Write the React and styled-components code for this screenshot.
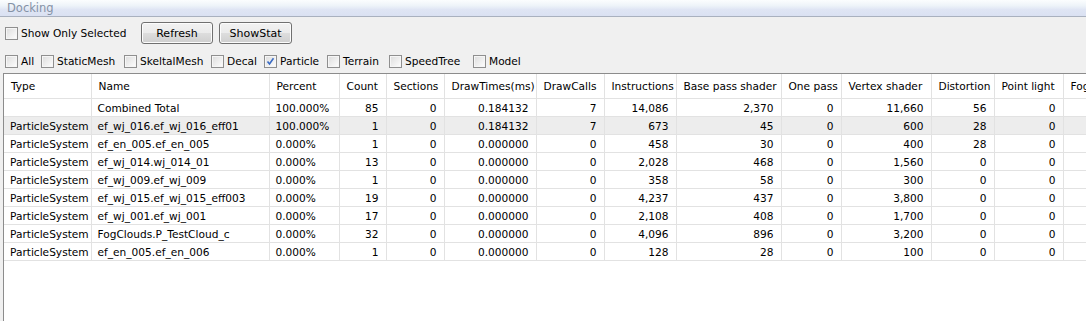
import React from "react";
import styled, { createGlobalStyle } from "styled-components";

const Global = createGlobalStyle`
  html, body { margin: 0; padding: 0; background: #f0f0f0; overflow: hidden; }
  body { font-family: "DejaVu Sans", Tahoma, sans-serif; font-size: 10.6px; color: #000; }
`;

const Window = styled.div`
  width: 1086px;
  height: 321px;
  display: flex;
  flex-direction: column;
  background: #f0f0f0;
  overflow: hidden;
`;

const TitleBar = styled.div`
  height: 16px;
  flex: none;
  display: flex;
  align-items: center;
  padding-left: 7px;
  background: linear-gradient(#fbfdfe 0%, #eef4f9 35%, #dfe5f4 60%, #dae1f2 100%);
  border-bottom: 1px solid #a9b1bf;
  color: #8592a6;
  font-size: 11.5px;
`;

const ToolRow = styled.div`
  display: flex;
  align-items: center;
  padding-left: 5px;
  margin-top: ${(p) => p.$top}px;
  height: ${(p) => p.$h}px;
  flex: none;
`;

const CheckItem = styled.label`
  display: inline-flex;
  align-items: center;
  gap: 3px;
  width: ${(p) => p.$w}px;
  flex: none;
  white-space: nowrap;
`;

const Box = styled.span`
  width: 11px;
  height: 11px;
  flex: none;
  border: 1px solid #8f8f8f;
  background: linear-gradient(135deg, #dcdcdc 0%, #f4f4f4 70%, #ffffff 100%);
  box-shadow: inset 0 0 0 1px #f6f6f6;
  display: inline-flex;
  align-items: center;
  justify-content: center;
`;

const Button = styled.button`
  height: 22px;
  width: ${(p) => p.$w}px;
  margin-right: ${(p) => p.$mr ?? 0}px;
  flex: none;
  border: 1px solid #707070;
  border-radius: 3px;
  background: linear-gradient(#f2f2f2 0%, #ebebeb 50%, #dddddd 51%, #cfcfcf 100%);
  box-shadow: inset 0 0 0 1px #fcfcfc;
  font-family: inherit;
  font-size: 11px;
  color: #000;
  padding: 0;
`;

const TableWrap = styled.div`
  margin-top: 5px;
  margin-left: 3px;
  flex: 1;
  background: #fff;
  border-top: 1px solid #8c8c8c;
  border-left: 1px solid #8c8c8c;
  overflow: hidden;
`;

const Table = styled.table`
  border-collapse: collapse;
  table-layout: fixed;
  width: ${(p) => p.$w}px;
`;

const Th = styled.th`
  height: 24px;
  font-weight: normal;
  text-align: left;
  padding: 0 0 0 7px;
  border-right: 1px solid #e2e2e2;
  border-bottom: 1px solid #e2e2e2;
  white-space: nowrap;
  overflow: hidden;
  background: #fff;
`;

const Tr = styled.tr`
  background: ${(p) => (p.$sel ? "#ededed" : "#fff")};
`;

const Td = styled.td`
  height: 17px;
  padding: 0 ${(p) => (p.$num ? "7px" : "0")} 0 ${(p) => (p.$num ? "0" : "6px")};
  text-align: ${(p) => (p.$num ? "right" : "left")};
  border-right: 1px solid #e2e2e2;
  border-bottom: 1px solid #e2e2e2;
  white-space: nowrap;
  overflow: hidden;
`;

const Check = () => (
  <svg width="9" height="9" viewBox="0 0 9 9">
    <path d="M1.5 4.5 L3.5 7 L7.5 1.2" fill="none" stroke="#3a6bc4" strokeWidth="1.6" />
  </svg>
);

const CheckBox = ({ label, checked, w }) => (
  <CheckItem $w={w}>
    <Box>{checked && <Check />}</Box>
    {label}
  </CheckItem>
);

const filters = [
  { label: "All", w: 36 },
  { label: "StaticMesh", w: 83 },
  { label: "SkeltalMesh", w: 87 },
  { label: "Decal", w: 53 },
  { label: "Particle", w: 63, checked: true },
  { label: "Terrain", w: 62 },
  { label: "SpeedTree", w: 84 },
  { label: "Model", w: 60 },
];

const columns = [
  { name: "Type", w: 87 },
  { name: "Name", w: 178 },
  { name: "Percent", w: 70 },
  { name: "Count", w: 47, num: true },
  { name: "Sections", w: 58, num: true },
  { name: "DrawTimes(ms)", w: 92, num: true },
  { name: "DrawCalls", w: 68, num: true },
  { name: "Instructions", w: 72, num: true },
  { name: "Base pass shader", w: 105, num: true },
  { name: "One pass", w: 60, num: true },
  { name: "Vertex shader", w: 90, num: true },
  { name: "Distortion", w: 63, num: true },
  { name: "Point light", w: 69, num: true },
  { name: "Fog", w: 80, num: true },
];

const rows = [
  ["", "Combined Total", "100.000%", "85", "0", "0.184132", "7", "14,086", "2,370", "0", "11,660", "56", "0", ""],
  ["ParticleSystem", "ef_wj_016.ef_wj_016_eff01", "100.000%", "1", "0", "0.184132", "7", "673", "45", "0", "600", "28", "0", ""],
  ["ParticleSystem", "ef_en_005.ef_en_005", "0.000%", "1", "0", "0.000000", "0", "458", "30", "0", "400", "28", "0", ""],
  ["ParticleSystem", "ef_wj_014.wj_014_01", "0.000%", "13", "0", "0.000000", "0", "2,028", "468", "0", "1,560", "0", "0", ""],
  ["ParticleSystem", "ef_wj_009.ef_wj_009", "0.000%", "1", "0", "0.000000", "0", "358", "58", "0", "300", "0", "0", ""],
  ["ParticleSystem", "ef_wj_015.ef_wj_015_eff003", "0.000%", "19", "0", "0.000000", "0", "4,237", "437", "0", "3,800", "0", "0", ""],
  ["ParticleSystem", "ef_wj_001.ef_wj_001", "0.000%", "17", "0", "0.000000", "0", "2,108", "408", "0", "1,700", "0", "0", ""],
  ["ParticleSystem", "FogClouds.P_TestCloud_c", "0.000%", "32", "0", "0.000000", "0", "4,096", "896", "0", "3,200", "0", "0", ""],
  ["ParticleSystem", "ef_en_005.ef_en_006", "0.000%", "1", "0", "0.000000", "0", "128", "28", "0", "100", "0", "0", ""],
];

const totalW = columns.reduce((a, c) => a + c.w, 0);

export default function App() {
  return (
    <>
      <Global />
      <Window>
        <TitleBar>Docking</TitleBar>
        <ToolRow $top={5} $h={22}>
          <CheckBox label="Show Only Selected" w={136} />
          <Button $w={72} $mr={6}>Refresh</Button>
          <Button $w={73}>ShowStat</Button>
        </ToolRow>
        <ToolRow $top={10} $h={14}>
          {filters.map((f) => (
            <CheckBox key={f.label} label={f.label} w={f.w} checked={f.checked} />
          ))}
        </ToolRow>
        <TableWrap>
          <Table $w={totalW}>
            <colgroup>
              {columns.map((c) => (
                <col key={c.name} style={{ width: c.w }} />
              ))}
            </colgroup>
            <thead>
              <tr>
                {columns.map((c) => (
                  <Th key={c.name}>{c.name}</Th>
                ))}
              </tr>
            </thead>
            <tbody>
              {rows.map((r, i) => (
                <Tr key={i} $sel={i === 1}>
                  {r.map((v, j) => (
                    <Td key={j} $num={columns[j].num}>{v}</Td>
                  ))}
                </Tr>
              ))}
            </tbody>
          </Table>
        </TableWrap>
      </Window>
    </>
  );
}
